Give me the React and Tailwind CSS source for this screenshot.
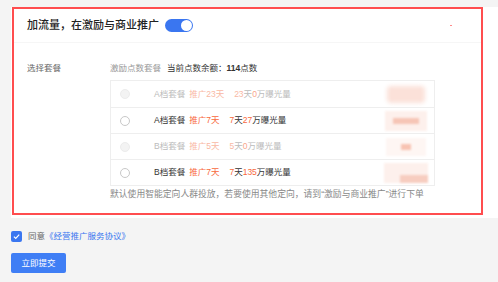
import React from "react";

const rows = [
  { name: "A档套餐", promo: "推广23天", exp: ["23", "天", "0", "万曝光量"], disabled: true },
  { name: "A档套餐", promo: "推广7天", exp: ["7", "天", "27", "万曝光量"], disabled: false },
  { name: "B档套餐", promo: "推广5天", exp: ["5", "天", "0", "万曝光量"], disabled: true },
  { name: "B档套餐", promo: "推广7天", exp: ["7", "天", "135", "万曝光量"], disabled: false },
];

function Blur({ idx }) {
  // pixelated / blurred region on the right side of every row
  if (idx === 0)
    return <div className="h-[17px] w-[38px] rounded-sm bg-[#fbe1d9] blur-[2px]" />;
  if (idx === 1)
    return (
      <div className="flex h-[20px] w-[42px] items-center justify-center bg-[#fdf0ec] blur-[1px]">
        <div className="h-[6px] w-[26px] bg-[#f6c5b6]" />
      </div>
    );
  if (idx === 2)
    return (
      <div className="flex h-[18px] w-[40px] items-center justify-center bg-[#fef6f3] blur-[1px]">
        <div className="h-[6px] w-[10px] bg-[#f8c3b2]" />
      </div>
    );
  return (
    <div className="flex h-[20px] w-[44px] items-end justify-end bg-[#fdf0ec] blur-[1px]">
      <div className="h-[8px] w-[28px] bg-[#f7cdc0]" />
    </div>
  );
}

export default function App() {
  return (
    <div className="min-h-[282px] bg-[#f4f4f4] pt-[7px] font-['Liberation_Sans','Noto_Sans_CJK_SC',sans-serif]">
      {/* Card */}
      <div className="ml-[11px] h-[211px] bg-white pl-px">
        <div className="h-[208px] w-[471px] border-2 border-[#ff4d4f]">
          {/* Header */}
          <div className="flex h-[34px] items-center justify-between border-b border-[#f6f6f6] pl-[13px] pr-[29px]">
            <div className="flex items-center">
              <span className="text-[11px] font-medium leading-none text-[#222]">
                加流量，在激励与商业推广
              </span>
              <div className="ml-[6px] flex h-[13px] w-[28px] items-center justify-end rounded-full bg-[#3a76f0] pr-[1.5px]">
                <div className="h-[10.5px] w-[10.5px] rounded-full bg-white" />
              </div>
            </div>
            <div className="h-px w-[2px] bg-[#ff8a8a]" />
          </div>

          {/* Body */}
          <div className="flex pl-[13px] pt-[19px]">
            <div className="w-[83px] text-[8.5px] leading-[12px] text-[#666]">选择套餐</div>
            <div>
              <div className="flex items-center text-[8.5px] leading-[12px]">
                <span className="text-[#999]">激励点数套餐</span>
                <span className="ml-[6px] text-[#333]">当前点数余额：</span>
                <span className="font-bold text-[#333]">114</span>
                <span className="text-[#333]">点数</span>
              </div>

              <div className="mt-[6px] w-[325px] border border-[#eeeeee]">
                {rows.map((r, i) => (
                  <div
                    key={i}
                    className={`flex h-[26px] items-center pl-[9px] text-[8.5px] ${
                      i > 0 ? "border-t border-[#eeeeee]" : ""
                    }`}
                  >
                    <div
                      className={`h-[10px] w-[10px] rounded-full border ${
                        r.disabled ? "border-[#ececec] bg-[#f3f3f3]" : "border-[#c8c8c8] bg-white"
                      }`}
                    />
                    <span className={`ml-[24px] ${r.disabled ? "text-[#bbb]" : "text-[#333]"}`}>
                      {r.name}
                    </span>
                    <span className={`ml-[4px] ${r.disabled ? "text-[#f9b8a4]" : "text-[#f8683c]"}`}>
                      {r.promo}
                    </span>
                    <span className="ml-[10px]">
                      <span className={r.disabled ? "text-[#f9b8a4]" : "text-[#f8683c]"}>{r.exp[0]}</span>
                      <span className={r.disabled ? "text-[#bbb]" : "text-[#333]"}>{r.exp[1]}</span>
                      <span className={r.disabled ? "text-[#f9a68c]" : "text-[#f8683c]"}>{r.exp[2]}</span>
                      <span className={r.disabled ? "text-[#bbb]" : "text-[#333]"}>{r.exp[3]}</span>
                    </span>
                    <div className="ml-auto mr-[5px] flex w-[46px] justify-center">
                      <Blur idx={i} />
                    </div>
                  </div>
                ))}
              </div>

              <div className="mt-[2px] whitespace-nowrap text-[8.8px] leading-[12px] text-[#888]">
                默认使用智能定向人群投放，若要使用其他定向，请到“激励与商业推广”进行下单
              </div>
            </div>
          </div>
        </div>
      </div>

      {/* Agreement */}
      <div className="ml-[11px] mt-[13px] flex items-center text-[8.5px] leading-[11px]">
        <div className="flex h-[11px] w-[11px] items-center justify-center rounded-[2px] bg-[#3a76f0]">
          <svg viewBox="0 0 12 12" className="h-[9px] w-[9px]">
            <polyline points="2.5,6.2 5,8.6 9.6,3.6" fill="none" stroke="white" strokeWidth="1.6" />
          </svg>
        </div>
        <span className="ml-[6px] text-[#666]">同意</span>
        <span className="text-[#3a76f0]">《经营推广服务协议》</span>
      </div>

      {/* Submit */}
      <button className="ml-[11px] mt-[11px] flex h-[20px] w-[55px] items-center justify-center rounded-[2px] bg-[#3f7ef5] text-[8.5px] text-white">
        立即提交
      </button>
    </div>
  );
}
